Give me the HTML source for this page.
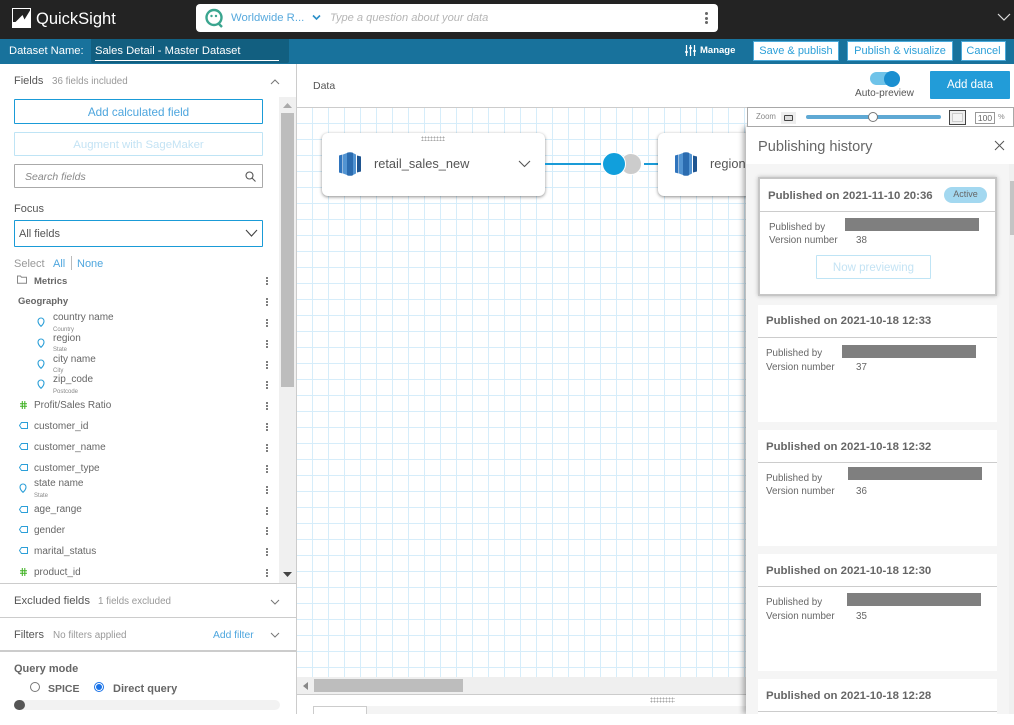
<!DOCTYPE html>
<html><head><meta charset="utf-8"><style>
html,body{margin:0;padding:0;background:#fff}
#p{position:relative;width:1014px;height:725px;overflow:hidden;background:#fff;font-family:"Liberation Sans",sans-serif;color:#555}
#c{position:absolute;left:0;top:0;width:1014px;height:714px;overflow:hidden}
#c div,#c span,#c svg{position:absolute;box-sizing:border-box}
.t{white-space:nowrap;line-height:14px;font-size:10.5px;margin-top:1px}
.b{font-weight:bold}
.bl{color:#2b9fd8}
.g{color:#999}
.f{color:#666;font-size:10px}
.v{color:#666;font-size:9.8px}
.s{color:#888;font-size:6px;line-height:8px}
.d{width:2px;height:2px;background:#555;left:266px;box-shadow:0 3px 0 #555,0 6px 0 #555;border-radius:1px;margin-top:-1px}
.card{left:758px;width:239px;background:#fff}
.ln{left:758px;width:239px;height:1px;background:#ccc}
.r{background:#7f7f7f;width:134px;height:13px}
.ch{color:#666;font-size:11.4px;font-weight:bold}
.btn{background:#fff;border:1px solid #4aa8d8;color:#2b9fd8;text-align:center;font-size:11px;top:41px;height:20px;line-height:19px;white-space:nowrap}
</style></head><body><div id="p"><div id="c">

<!-- top bar -->
<div style="left:0;top:0;width:1014px;height:39px;background:#232323"></div>
<svg style="left:12px;top:8px" width="19" height="20" viewBox="0 0 19 20"><rect width="19" height="20" fill="#fff"/><path d="M1 1H18V2.500L12.500 11.500 10.500 7 3.500 14H1Z" fill="#232323"/></svg>
<span class="t" style="left:36px;top:9px;color:#fff;font-size:16.5px;line-height:18px">QuickSight</span>
<div style="left:196px;top:4px;width:522px;height:28px;background:#fff;border-radius:4px"></div>
<svg style="left:204px;top:8px" width="21" height="21" viewBox="0 0 21 21" fill="none"><circle cx="10" cy="9.500" r="7.500" stroke="#3aa58f" stroke-width="2.400"/><path d="M14 15l4 4" stroke="#3aa58f" stroke-width="2.400"/><circle cx="7.500" cy="8" r="1.200" fill="#3aa58f"/><circle cx="12" cy="8" r="1.200" fill="#3aa58f"/></svg>
<span class="t bl" style="left:231px;top:10px;font-size:11.3px;color:#57a9dd">Worldwide R...</span>
<svg style="left:312px;top:14px" width="9" height="7" viewBox="0 0 9 7" fill="none"><path d="M1 1.500l3.500 3.500L8 1.500" stroke="#2b8fc8" stroke-width="1.600"/></svg>
<span class="t g" style="left:330px;top:10px;font-style:italic;font-size:11.1px;color:#b5b5b5">Type a question about your data</span>
<div style="left:705px;top:12px;width:3px;height:3px;border-radius:2px;background:#666;box-shadow:0 5px 0 #666,0 9px 0 #666"></div>
<svg style="left:997px;top:13px" width="14" height="9" viewBox="0 0 14 9" fill="none"><path d="M1 1l6 6 6-6" stroke="#ddd" stroke-width="1.200"/></svg>

<!-- blue bar -->
<div style="left:0;top:39px;width:1014px;height:25px;background:#18729c"></div>
<div style="left:91px;top:39px;width:198px;height:24px;background:#125f80;border-radius:0 0 2px 2px"></div>
<span class="t" style="left:9px;top:43px;color:#fff;font-size:11.2px">Dataset Name:</span>
<span class="t" style="left:95px;top:43px;color:#fff;font-size:11.2px">Sales Detail - Master Dataset</span>
<div style="left:95px;top:60px;width:184px;height:1px;background:#fff"></div>
<svg style="left:685px;top:45px" width="11" height="11" viewBox="0 0 11 11" fill="none" stroke="#fff" stroke-width="1.200"><path d="M1.500 0v11M5.500 0v11M9.500 0v11"/><path d="M0 7h3M4 3h3M8 6h3" stroke-width="1.600"/></svg>
<span class="t b" style="left:700px;top:43px;color:#fff;font-size:9.5px">Manage</span>
<div class="btn" style="left:753px;width:86px">Save &amp; publish</div>
<div class="btn" style="left:847px;width:106px">Publish &amp; visualize</div>
<div class="btn" style="left:961px;width:45px">Cancel</div>

<!-- left panel -->
<div style="left:296px;top:64px;width:1px;height:650px;background:#ccc"></div>
<span class="t" style="left:14px;top:73px;font-size:11px">Fields</span>
<span class="t g" style="left:52px;top:74px;font-size:9.8px">36 fields included</span>
<svg style="left:270px;top:79px" width="10" height="6" viewBox="0 0 10 6" fill="none"><path d="M1 5l4-4 4 4" stroke="#777"/></svg>
<div style="left:14px;top:99px;width:249px;height:25px;border:1px solid #1a9bd7;border-radius:1px"></div>
<span class="t" style="left:14px;top:105px;width:249px;text-align:center;color:#4ea6de;font-size:11.7px">Add calculated field</span>
<div style="left:14px;top:132px;width:249px;height:24px;border:1px solid #bfe4f5;border-radius:1px"></div>
<span class="t" style="left:14px;top:137px;width:249px;text-align:center;color:#c4e3f4;font-size:11.4px">Augment with SageMaker</span>
<div style="left:14px;top:164px;width:249px;height:24px;border:1px solid #aaa;border-radius:1px"></div>
<span class="t" style="left:25px;top:169px;font-style:italic;color:#888">Search fields</span>
<svg style="left:245px;top:171px" width="11" height="11" viewBox="0 0 11 11" fill="none" stroke="#555" stroke-width="1.100"><circle cx="4.500" cy="4.500" r="3.500"/><path d="M7 7l3.500 3.500"/></svg>
<span class="t" style="left:14px;top:201px;font-size:11px">Focus</span>
<div style="left:14px;top:220px;width:249px;height:27px;border:1px solid #1a9bd7;border-radius:1px"></div>
<span class="t" style="left:19px;top:226px;font-size:11px">All fields</span>
<svg style="left:245px;top:229px" width="13" height="9" viewBox="0 0 13 9" fill="none"><path d="M1 1l5.500 6L12 1" stroke="#444" stroke-width="1.100"/></svg>
<span class="t g" style="left:14px;top:256px;font-size:11px">Select</span>
<span class="t" style="left:53px;top:256px;font-size:11px;color:#4ea6de">All</span>
<div style="left:71px;top:256px;width:1px;height:14px;background:#bbb"></div>
<span class="t" style="left:77px;top:256px;font-size:11px;color:#4ea6de">None</span>

<!-- scrollbar -->
<div style="left:279px;top:97px;width:17px;height:486px;background:#f0f0f0"></div>
<div style="left:281px;top:113px;width:13px;height:274px;background:#bdbdbd"></div>
<svg style="left:283px;top:103px" width="9" height="5"><path d="M0 5L4.500 0 9 5Z" fill="#aaa"/></svg>
<svg style="left:283px;top:572px" width="9" height="5"><path d="M0 0L4.500 5 9 0Z" fill="#444"/></svg>

<!-- fields -->
<svg style="left:17px;top:275px" width="10" height="9" viewBox="0 0 10 9" fill="none"><path d="M.5 1h3l1 1.200h5v6h-9z" stroke="#888"/></svg>
<span class="t f b" style="left:34px;top:274px;font-size:9.500px">Metrics</span><div class="d" style="top:278px"></div>
<span class="t f b" style="left:18px;top:294px;font-size:9.500px">Geography</span><div class="d" style="top:299px"></div>

<svg style="left:37px;top:317px" width="8" height="10" viewBox="0 0 8 10" fill="none"><path d="M4 9.300C2 7.500 1 6 1 4a3 3 0 016 0c0 2-1 3.500-3 5.300z" stroke="#2b9fd8" stroke-width="1.100"/></svg>
<span class="t f" style="left:53px;top:310px">country name</span><span class="t s" style="left:53px;top:325px">Country</span><div class="d" style="top:320px"></div>
<svg style="left:37px;top:338px" width="8" height="10" viewBox="0 0 8 10" fill="none"><path d="M4 9.300C2 7.500 1 6 1 4a3 3 0 016 0c0 2-1 3.500-3 5.300z" stroke="#2b9fd8" stroke-width="1.100"/></svg>
<span class="t f" style="left:53px;top:331px">region</span><span class="t s" style="left:53px;top:345px">State</span><div class="d" style="top:341px"></div>
<svg style="left:37px;top:359px" width="8" height="10" viewBox="0 0 8 10" fill="none"><path d="M4 9.300C2 7.500 1 6 1 4a3 3 0 016 0c0 2-1 3.500-3 5.300z" stroke="#2b9fd8" stroke-width="1.100"/></svg>
<span class="t f" style="left:53px;top:352px">city name</span><span class="t s" style="left:53px;top:366px">City</span><div class="d" style="top:362px"></div>
<svg style="left:37px;top:379px" width="8" height="10" viewBox="0 0 8 10" fill="none"><path d="M4 9.300C2 7.500 1 6 1 4a3 3 0 016 0c0 2-1 3.500-3 5.300z" stroke="#2b9fd8" stroke-width="1.100"/></svg>
<span class="t f" style="left:53px;top:372px">zip_code</span><span class="t s" style="left:53px;top:387px">Postcode</span><div class="d" style="top:382px"></div>

<svg style="left:20px;top:401px" width="7" height="8" viewBox="0 0 7 8" stroke="#3cb01f" fill="none"><path d="M2.300 0v8M4.800 0v8M0 2.700h7M0 5.300h7"/></svg>
<span class="t f" style="left:34px;top:398px">Profit/Sales Ratio</span><div class="d" style="top:403px"></div>

<svg style="left:19px;top:422px" width="9" height="7" viewBox="0 0 9 7" fill="none"><path d="M2.500.5h6v6h-6L.5 3.500z" stroke="#2b9fd8"/></svg>
<span class="t f" style="left:34px;top:419px">customer_id</span><div class="d" style="top:424px"></div>
<svg style="left:19px;top:443px" width="9" height="7" viewBox="0 0 9 7" fill="none"><path d="M2.500.5h6v6h-6L.5 3.500z" stroke="#2b9fd8"/></svg>
<span class="t f" style="left:34px;top:440px">customer_name</span><div class="d" style="top:445px"></div>
<svg style="left:19px;top:464px" width="9" height="7" viewBox="0 0 9 7" fill="none"><path d="M2.500.5h6v6h-6L.5 3.500z" stroke="#2b9fd8"/></svg>
<span class="t f" style="left:34px;top:461px">customer_type</span><div class="d" style="top:466px"></div>

<svg style="left:19px;top:483px" width="8" height="10" viewBox="0 0 8 10" fill="none"><path d="M4 9.300C2 7.500 1 6 1 4a3 3 0 016 0c0 2-1 3.500-3 5.300z" stroke="#2b9fd8" stroke-width="1.100"/></svg>
<span class="t f" style="left:34px;top:476px">state name</span><span class="t s" style="left:34px;top:491px">State</span><div class="d" style="top:487px"></div>

<svg style="left:19px;top:506px" width="9" height="7" viewBox="0 0 9 7" fill="none"><path d="M2.500.5h6v6h-6L.5 3.500z" stroke="#2b9fd8"/></svg>
<span class="t f" style="left:34px;top:502px">age_range</span><div class="d" style="top:508px"></div>
<svg style="left:19px;top:526px" width="9" height="7" viewBox="0 0 9 7" fill="none"><path d="M2.500.5h6v6h-6L.5 3.500z" stroke="#2b9fd8"/></svg>
<span class="t f" style="left:34px;top:523px">gender</span><div class="d" style="top:528px"></div>
<svg style="left:19px;top:547px" width="9" height="7" viewBox="0 0 9 7" fill="none"><path d="M2.500.5h6v6h-6L.5 3.500z" stroke="#2b9fd8"/></svg>
<span class="t f" style="left:34px;top:544px">marital_status</span><div class="d" style="top:549px"></div>
<svg style="left:20px;top:568px" width="7" height="8" viewBox="0 0 7 8" stroke="#3cb01f" fill="none"><path d="M2.300 0v8M4.800 0v8M0 2.700h7M0 5.300h7"/></svg>
<span class="t f" style="left:34px;top:565px">product_id</span><div class="d" style="top:570px"></div>

<div style="left:0;top:583px;width:296px;height:1px;background:#ccc"></div>
<span class="t" style="left:14px;top:593px;font-size:11.3px">Excluded fields</span>
<span class="t g" style="left:98px;top:594px;font-size:9.8px">1 fields excluded</span>
<svg style="left:270px;top:599px" width="10" height="6" viewBox="0 0 10 6" fill="none"><path d="M1 1l4 4 4-4" stroke="#777"/></svg>
<div style="left:0;top:617px;width:296px;height:1px;background:#ccc"></div>
<span class="t" style="left:14px;top:627px;font-size:11px">Filters</span>
<span class="t g" style="left:53px;top:628px;font-size:9.9px">No filters applied</span>
<span class="t" style="left:213px;top:628px;font-size:10.3px;color:#4ea6de">Add filter</span>
<svg style="left:270px;top:632px" width="10" height="6" viewBox="0 0 10 6" fill="none"><path d="M1 1l4 4 4-4" stroke="#777"/></svg>
<div style="left:0;top:650px;width:296px;height:2px;background:#ccc"></div>
<span class="t b" style="left:14px;top:661px;font-size:11px;color:#666">Query mode</span>
<div style="left:30px;top:682px;width:10px;height:10px;border:1px solid #777;border-radius:50%"></div>
<span class="t b" style="left:48px;top:681px;font-size:10.5px;color:#666">SPICE</span>
<div style="left:94px;top:682px;width:10px;height:10px;border:1px solid #1a73e8;border-radius:50%"></div>
<div style="left:96px;top:684px;width:6px;height:6px;background:#1a73e8;border-radius:50%"></div>
<span class="t b" style="left:113px;top:681px;font-size:11px;color:#666">Direct query</span>
<div style="left:14px;top:700px;width:266px;height:10px;border-radius:5px;background:#f2f2f2"></div>
<div style="left:14px;top:700px;width:11px;height:10px;border-radius:5px;background:#555"></div>

<!-- data header -->
<span class="t" style="left:313px;top:78px;font-size:10.500px">Data</span>
<div style="left:870px;top:72px;width:30px;height:13px;border-radius:7px;background:#6fc3e9"></div>
<div style="left:884px;top:71px;width:16px;height:16px;border-radius:50%;background:#1a8fd0"></div>
<span class="t" style="left:855px;top:86px;font-size:10.1px">Auto-preview</span>
<div style="left:930px;top:71px;width:80px;height:28px;background:#229cd8;color:#fff;font-size:11.500px;line-height:29px;text-align:center;border-radius:1px">Add data</div>
<div style="left:297px;top:107px;width:717px;height:1px;background:#ccc"></div>

<!-- canvas -->
<div style="left:297px;top:108px;width:450px;height:569px;background-color:#fff;background-image:linear-gradient(to right,#d6edfa 1px,transparent 1px),linear-gradient(to bottom,#d6edfa 1px,transparent 1px);background-size:16px 16px;background-position:15px 15px"></div>

<div style="left:322px;top:133px;width:223px;height:63px;background:#fff;border-radius:6px;box-shadow:0 1px 3px rgba(0,0,0,.45)"></div>
<div style="left:421px;top:136px;width:24px;height:5px;background-image:radial-gradient(#aaa 45%,transparent 50%);background-size:3px 3px"></div>
<svg style="left:339px;top:152px" width="22" height="24" viewBox="0 0 22 24"><path d="M0 3.500l3.500-1v19l-3.500-1z" fill="#2f74bd"/><path d="M4 2.500L8 1v22l-4-1.500z" fill="#5294d2"/><path d="M8 .8C10 0 12 0 14 .8v22.400c-2 .8-4 .8-6 0z" fill="#2b6cb0"/><path d="M14 1l3 1.500v19l-3 1.500z" fill="#5294d2"/><path d="M18 3.500l4 1v15l-4 1z" fill="#1f5590"/></svg>
<span class="t" style="left:374px;top:156px;font-size:12.8px;color:#555">retail_sales_new</span>
<svg style="left:518px;top:160px" width="13" height="8" viewBox="0 0 13 8" fill="none"><path d="M1 1l5.500 5.500L12 1" stroke="#555" stroke-width="1.100"/></svg>

<div style="left:545px;top:163px;width:56px;height:2px;background:#1a9bd7"></div>
<div style="left:644px;top:163px;width:14px;height:2px;background:#1a9bd7"></div>
<div style="left:620px;top:153px;width:22px;height:22px;border-radius:50%;background:#ccc;border:1px solid #fff"></div>
<div style="left:602px;top:152px;width:24px;height:24px;border-radius:50%;background:#119fdc;border:1px solid #fff"></div>

<div style="left:658px;top:133px;width:120px;height:63px;background:#fff;border-radius:6px;box-shadow:0 1px 3px rgba(0,0,0,.45)"></div>
<svg style="left:675px;top:152px" width="22" height="24" viewBox="0 0 22 24"><path d="M0 3.500l3.500-1v19l-3.500-1z" fill="#2f74bd"/><path d="M4 2.500L8 1v22l-4-1.500z" fill="#5294d2"/><path d="M8 .8C10 0 12 0 14 .8v22.400c-2 .8-4 .8-6 0z" fill="#2b6cb0"/><path d="M14 1l3 1.500v19l-3 1.500z" fill="#5294d2"/><path d="M18 3.500l4 1v15l-4 1z" fill="#1f5590"/></svg>
<span class="t" style="left:710px;top:156px;font-size:12.8px;color:#555">region</span>

<!-- h scroll -->
<div style="left:297px;top:677px;width:450px;height:17px;background:#efefef"></div>
<div style="left:314px;top:679px;width:149px;height:13px;background:#bdbdbd"></div>
<svg style="left:303px;top:682px" width="5" height="8"><path d="M5 0L0 4 5 8Z" fill="#888"/></svg>
<div style="left:297px;top:694px;width:450px;height:1px;background:#ccc"></div>
<div style="left:650px;top:697px;width:25px;height:6px;background-image:radial-gradient(#aaa 45%,transparent 50%);background-size:3px 3px"></div>
<div style="left:367px;top:706px;width:380px;height:8px;background:#f4f4f4"></div>
<div style="left:313px;top:706px;width:54px;height:8px;border:1px solid #ccc;border-bottom:0"></div>

<!-- publishing panel -->
<div style="left:746px;top:127px;width:268px;height:587px;background:#f5f5f5;box-shadow:-3px 0 5px rgba(0,0,0,.3)"></div>
<div style="left:746px;top:127px;width:268px;height:37px;background:#fff"></div>
<span class="t" style="left:758px;top:138px;font-size:14.6px;line-height:16px;color:#666">Publishing history</span>
<svg style="left:994px;top:140px" width="11" height="11" viewBox="0 0 11 11" stroke="#555" stroke-width="1"><path d="M1 1l9 9M10 1l-9 9"/></svg>
<div style="left:1009px;top:164px;width:5px;height:550px;background:#f0f0f0"></div>
<div style="left:1010px;top:181px;width:4px;height:54px;background:#c4c4c4"></div>

<!-- zoom bar -->
<div style="left:747px;top:107px;width:267px;height:20px;background:#fff;border:1px solid #a8a8a8"></div>
<span class="t" style="left:756px;top:110px;font-size:7.800px;line-height:12px;color:#888">Zoom</span>
<div style="left:781px;top:112px;width:15px;height:12px;background:#eee"></div>
<div style="left:784px;top:115px;width:9px;height:6px;border:1px solid #444;border-radius:1px;background:#ddd"></div>
<div style="left:806px;top:115px;width:135px;height:4px;border-radius:2px;background:#5fa9d4"></div>
<div style="left:868px;top:112px;width:10px;height:10px;border-radius:50%;background:#fff;border:1px solid #777"></div>
<div style="left:949px;top:110px;width:17px;height:15px;border:1px solid #444;background:#eee"></div>
<div style="left:952px;top:113px;width:11px;height:9px;border:1px solid #ccc;background:#f4f4f4"></div>
<div style="left:975px;top:112px;width:20px;height:12px;border:1px solid #999;font-size:8.500px;line-height:11px;text-align:center;color:#666">100</div>
<span class="t" style="left:998px;top:110px;font-size:7.500px;line-height:12px;color:#888">%</span>

<!-- card 1 -->
<div style="left:758px;top:177px;width:239px;height:119px;background:#fff;border:2px solid #c6c6c6;box-shadow:0 0 4px rgba(0,0,0,.25)"></div>
<span class="t ch" style="left:768px;top:188px">Published on 2021-11-10 20:36</span>
<div style="left:944px;top:187px;width:43px;height:16px;background:#a3d8f0;border-radius:8px;color:#666;font-size:9px;line-height:14px;text-align:center">Active</div>
<div style="left:760px;top:211px;width:235px;height:1px;background:#ccc"></div>
<span class="t v" style="left:769px;top:220px">Published by</span>
<span class="t v" style="left:769px;top:233px">Version number</span>
<span class="t v" style="left:856px;top:233px">38</span>
<div class="r" style="left:845px;top:218px"></div>
<div style="left:816px;top:255px;width:115px;height:24px;border:1px solid #bfe4f5;border-radius:1px;color:#c4e3f4;font-size:11.500px;line-height:24px;text-align:center">Now previewing</div>

<!-- card 2 -->
<div class="card" style="top:305px;height:117px"></div>
<span class="t ch" style="left:766px;top:313px">Published on 2021-10-18 12:33</span>
<div class="ln" style="top:337px"></div>
<span class="t v" style="left:766px;top:346px">Published by</span>
<span class="t v" style="left:766px;top:360px">Version number</span>
<span class="t v" style="left:856px;top:360px">37</span>
<div class="r" style="left:842px;top:345px"></div>

<!-- card 3 -->
<div class="card" style="top:430px;height:116px"></div>
<span class="t ch" style="left:766px;top:439px">Published on 2021-10-18 12:32</span>
<div class="ln" style="top:462px"></div>
<span class="t v" style="left:766px;top:471px">Published by</span>
<span class="t v" style="left:766px;top:484px">Version number</span>
<span class="t v" style="left:856px;top:484px">36</span>
<div class="r" style="left:848px;top:467px"></div>

<!-- card 4 -->
<div class="card" style="top:554px;height:117px"></div>
<span class="t ch" style="left:766px;top:563px">Published on 2021-10-18 12:30</span>
<div class="ln" style="top:586px"></div>
<span class="t v" style="left:766px;top:595px">Published by</span>
<span class="t v" style="left:766px;top:609px">Version number</span>
<span class="t v" style="left:856px;top:609px">35</span>
<div class="r" style="left:847px;top:593px"></div>

<!-- card 5 -->
<div class="card" style="top:679px;height:35px"></div>
<span class="t ch" style="left:766px;top:688px">Published on 2021-10-18 12:28</span>
<div class="ln" style="top:711px"></div>

</div></div></body></html>
